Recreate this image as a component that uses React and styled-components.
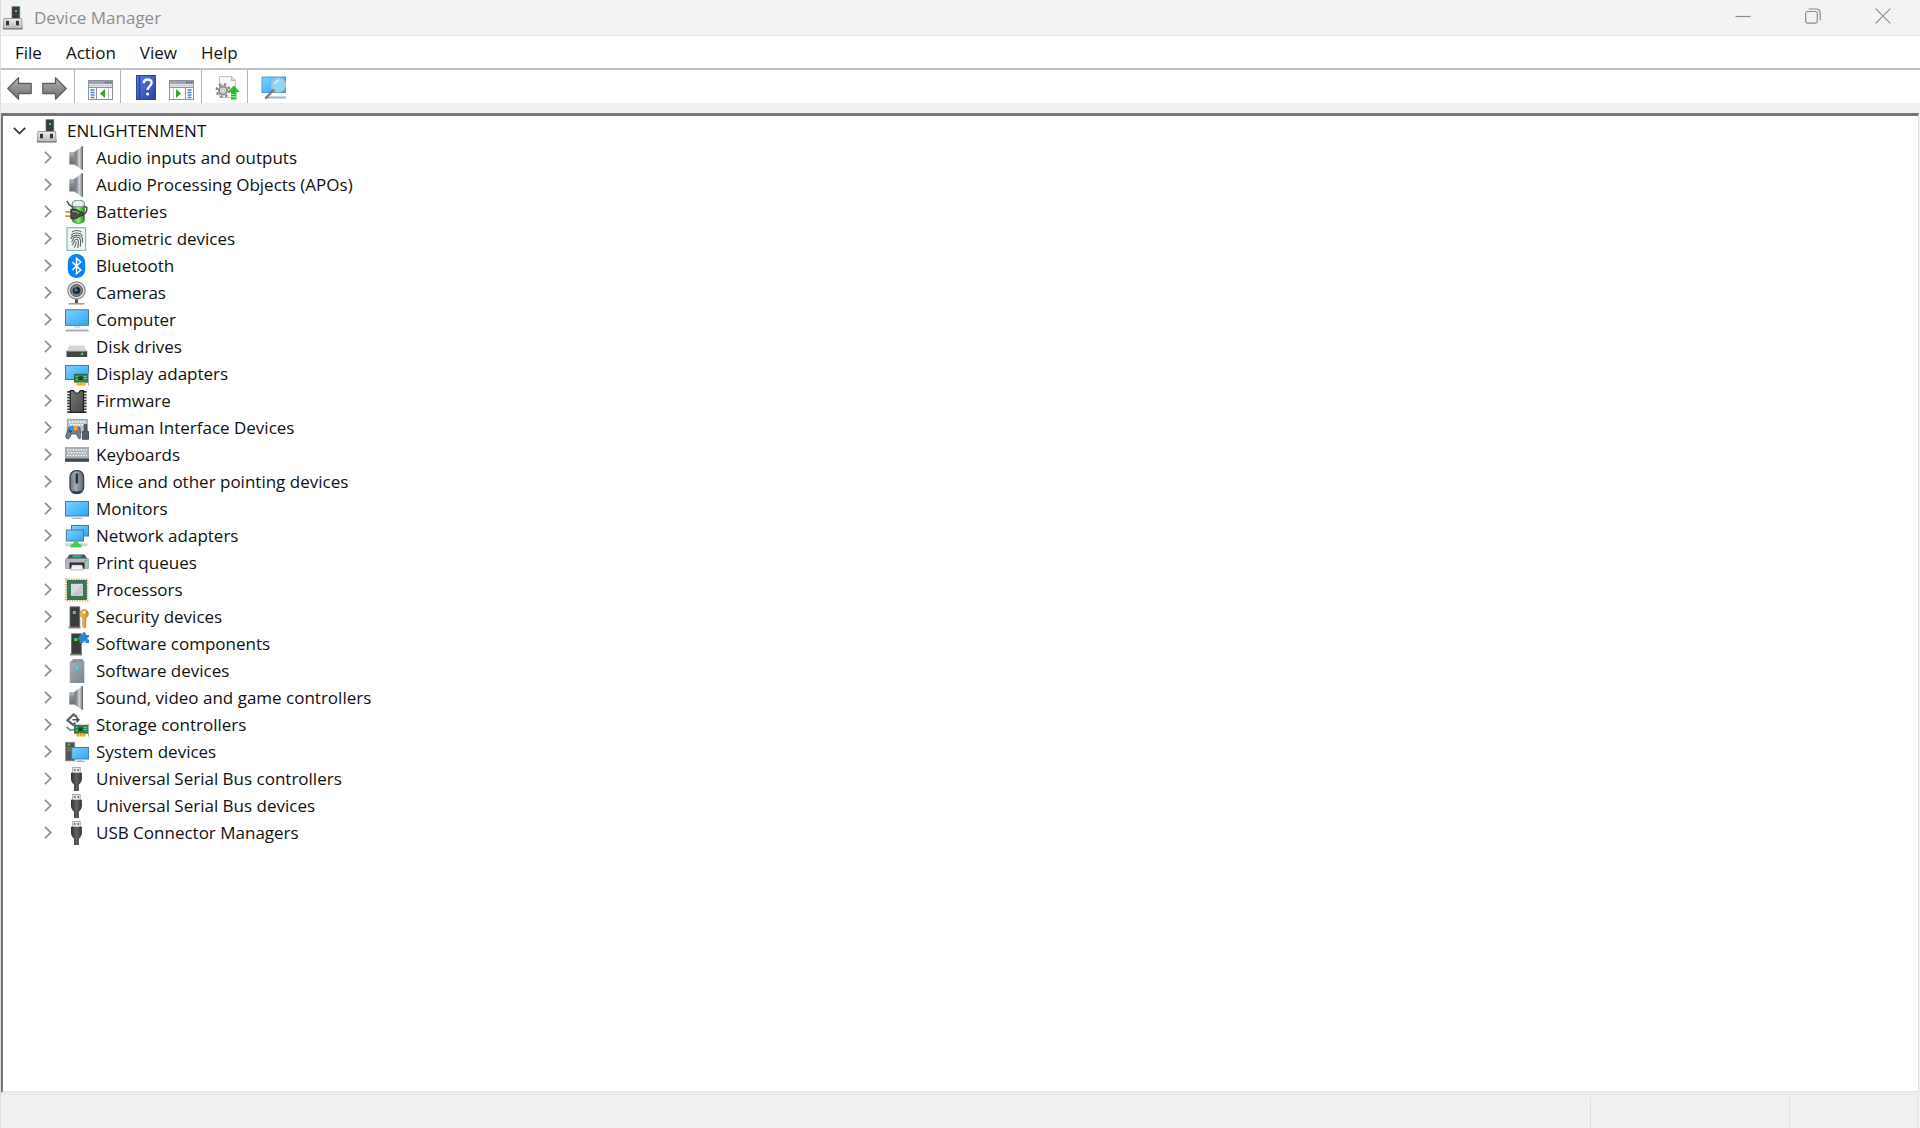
import React, { useState } from "react";
import styled, { createGlobalStyle } from "styled-components";

const App = () => {
  const [open, setOpen] = useState(true);

  return (
    <>
      <GlobalStyle />
      <Gradients />
      <Window>
        <TitleBar>
          <DeviceIcon name="root" />
          <Title>Device Manager</Title>
          <WindowButton aria-label="Minimize">
            <svg width="16" height="16" viewBox="0 0 16 16"><path d="M0.5 8.5h15" /></svg>
          </WindowButton>
          <WindowButton aria-label="Restore">
            <svg width="16" height="16" viewBox="0 0 16 16">
              <rect x="0.7" y="3.5" width="11.6" height="11.6" rx="1.8" />
              <path d="M3.6 1h7.6c2.4 0 4 1.6 4 4v7.2" />
            </svg>
          </WindowButton>
          <WindowButton aria-label="Close">
            <svg width="16" height="16" viewBox="0 0 16 16"><path d="M0.7 0.7l14.6 14.6M15.3 0.7L0.7 15.3" /></svg>
          </WindowButton>
        </TitleBar>

        <MenuBar>
          {menus.map((menu) => (
            <MenuButton key={menu}>{menu}</MenuButton>
          ))}
        </MenuBar>

        <Toolbar>
          {tools.map((group, index) => (
            <ToolGroup key={index}>
              {group.map((tool) => (
                <ToolButton key={tool.name} aria-label={tool.label}>
                  <svg width="25" height="25" viewBox="0 0 25 25">{toolIcons[tool.name]}</svg>
                </ToolButton>
              ))}
            </ToolGroup>
          ))}
        </Toolbar>

        <TreePanel>
          <Tree>
            <li>
              <TreeRow>
                <Expander aria-label="Toggle ENLIGHTENMENT" $open={open} onClick={() => setOpen(!open)}>
                  <svg width="13" height="8" viewBox="0 0 13 8"><path d="M0.8 0.8L6.5 6.5L12.2 0.8" /></svg>
                </Expander>
                <DeviceIcon name="root" />
                <Label>ENLIGHTENMENT</Label>
              </TreeRow>
              {open && (
                <SubTree>
                  {devices.map((device) => (
                    <li key={device.name}>
                      <TreeRow>
                        <Expander aria-label={`Expand ${device.name}`}>
                          <svg width="8" height="13" viewBox="0 0 8 13"><path d="M1 0.8L6.8 6.5L1 12.2" /></svg>
                        </Expander>
                        <DeviceIcon name={device.icon} />
                        <Label>{device.name}</Label>
                      </TreeRow>
                    </li>
                  ))}
                </SubTree>
              )}
            </li>
          </Tree>
        </TreePanel>

        <StatusBar>
          <StatusCell />
          <StatusCell $width="199px" />
          <StatusCell $width="128px" />
        </StatusBar>
      </Window>
    </>
  );
};

export default App;

const DeviceIcon = ({ name }) => (
  <IconSvg viewBox="0 0 24 24" aria-hidden="true">{deviceIcons[name]}</IconSvg>
);

const Gradients = () => (
  <GradientSvg width="0" height="0" aria-hidden="true">
    <defs>
      <linearGradient id="screen" x1="0" y1="0" x2="1" y2="1">
        <stop offset="0" stopColor="#7fd0fb" />
        <stop offset="0.5" stopColor="#55bcfb" />
        <stop offset="1" stopColor="#2ea3f7" />
      </linearGradient>
      <linearGradient id="metal" x1="0" y1="0" x2="0" y2="1">
        <stop offset="0" stopColor="#eeeef0" />
        <stop offset="1" stopColor="#b4b4b8" />
      </linearGradient>
      <linearGradient id="cone" x1="0" y1="0" x2="1" y2="0">
        <stop offset="0" stopColor="#6f7478" />
        <stop offset="0.35" stopColor="#8d9298" />
        <stop offset="0.7" stopColor="#d2d5d8" />
        <stop offset="1" stopColor="#8a8e93" />
      </linearGradient>
      <linearGradient id="coneBack" x1="0" y1="0" x2="0" y2="1">
        <stop offset="0" stopColor="#b5bbc0" />
        <stop offset="0.5" stopColor="#7c858d" />
        <stop offset="1" stopColor="#6b7178" />
      </linearGradient>
      <linearGradient id="dark" x1="0" y1="0" x2="1" y2="0">
        <stop offset="0" stopColor="#303030" />
        <stop offset="0.5" stopColor="#636363" />
        <stop offset="1" stopColor="#343434" />
      </linearGradient>
      <linearGradient id="chip" x1="0" y1="0" x2="1" y2="1">
        <stop offset="0" stopColor="#7a7a7a" />
        <stop offset="1" stopColor="#454545" />
      </linearGradient>
      <linearGradient id="arrow" x1="0" y1="0" x2="0" y2="1">
        <stop offset="0" stopColor="#b9b9b9" />
        <stop offset="0.5" stopColor="#8e8e8e" />
        <stop offset="1" stopColor="#747474" />
      </linearGradient>
      <linearGradient id="help" x1="0" y1="0" x2="1" y2="1">
        <stop offset="0" stopColor="#5a7fe6" />
        <stop offset="1" stopColor="#2b3f9e" />
      </linearGradient>
      <linearGradient id="cell" x1="0" y1="0" x2="1" y2="0">
        <stop offset="0" stopColor="#2d9f24" />
        <stop offset="0.5" stopColor="#8df07c" />
        <stop offset="1" stopColor="#209018" />
      </linearGradient>
      <linearGradient id="mouse" x1="0" y1="0" x2="1" y2="0">
        <stop offset="0" stopColor="#66707c" />
        <stop offset="0.4" stopColor="#a3afbb" />
        <stop offset="1" stopColor="#5c6672" />
      </linearGradient>
      <linearGradient id="slate" x1="0" y1="0" x2="1" y2="1">
        <stop offset="0" stopColor="#a9b2b9" />
        <stop offset="1" stopColor="#79838b" />
      </linearGradient>
      <linearGradient id="key" x1="0" y1="0" x2="1" y2="0">
        <stop offset="0" stopColor="#f3c35a" />
        <stop offset="1" stopColor="#c88e1e" />
      </linearGradient>
    </defs>
  </GradientSvg>
);

const menus = ["File", "Action", "View", "Help"];

const tools = [
  [
    { name: "back", label: "Back" },
    { name: "forward", label: "Forward" },
  ],
  [{ name: "tree", label: "Show/Hide Console Tree" }],
  [
    { name: "help", label: "Help" },
    { name: "pane", label: "Show/Hide Action Pane" },
  ],
  [{ name: "update", label: "Update device driver" }],
  [{ name: "scan", label: "Scan for hardware changes" }],
];

const devices = [
  { name: "Audio inputs and outputs", icon: "speaker" },
  { name: "Audio Processing Objects (APOs)", icon: "speaker" },
  { name: "Batteries", icon: "battery" },
  { name: "Biometric devices", icon: "fingerprint" },
  { name: "Bluetooth", icon: "bluetooth" },
  { name: "Cameras", icon: "camera" },
  { name: "Computer", icon: "computer" },
  { name: "Disk drives", icon: "disk" },
  { name: "Display adapters", icon: "display" },
  { name: "Firmware", icon: "firmware" },
  { name: "Human Interface Devices", icon: "hid" },
  { name: "Keyboards", icon: "keyboard" },
  { name: "Mice and other pointing devices", icon: "mouse" },
  { name: "Monitors", icon: "monitor" },
  { name: "Network adapters", icon: "network" },
  { name: "Print queues", icon: "printer" },
  { name: "Processors", icon: "processor" },
  { name: "Security devices", icon: "security" },
  { name: "Software components", icon: "component" },
  { name: "Software devices", icon: "software" },
  { name: "Sound, video and game controllers", icon: "speaker" },
  { name: "Storage controllers", icon: "storage" },
  { name: "System devices", icon: "system" },
  { name: "Universal Serial Bus controllers", icon: "usb" },
  { name: "Universal Serial Bus devices", icon: "usb" },
  { name: "USB Connector Managers", icon: "usb" },
];

const consoleFrame = (
  <>
    <rect x="0.5" y="5.5" width="24" height="19" fill="#fff" stroke="#8c939c" />
    <rect x="1" y="6" width="23" height="3" fill="#9aa5b4" />
    <path d="M17 7.5h1.5M19.5 7.5h1.5M22 7.5h1.5" stroke="#4b5a70" strokeWidth="1.4" />
    <path d="M1 10.5h23" stroke="#c3c9d0" strokeWidth="2" />
    <path d="M1 12.5h23" stroke="#8c939c" />
  </>
);

const toolIcons = {
  back: <path d="M0.8 13.5L11.5 2.6V8.5H24.2V18.5H11.5V24.2Z" fill="url(#arrow)" stroke="#5f5f5f" strokeWidth="1.3" strokeLinejoin="round" />,
  forward: <path d="M24.2 13.5L13.5 2.6V8.5H0.8V18.5H13.5V24.2Z" fill="url(#arrow)" stroke="#5f5f5f" strokeWidth="1.3" strokeLinejoin="round" />,
  tree: (
    <>
      {consoleFrame}
      <path d="M8.5 13v11" stroke="#8c939c" />
      <path d="M2.5 15h4M2.5 17.5h4M2.5 20h4M2.5 22.5h4" stroke="#4d7fc0" strokeWidth="1.3" />
      <path d="M20.5 13v11" stroke="#b9c0c8" />
      <path d="M17 14v9l-5-4.5z" fill="#35a81c" />
    </>
  ),
  help: (
    <>
      <rect x="2.5" y="0.5" width="19" height="24" fill="url(#help)" stroke="#2d469f" />
      <path d="M5.5 1v23" stroke="#2c4098" strokeWidth="1.5" />
      <path d="M9.8 8.3c0-2.5 1.7-3.8 3.9-3.8 2.5 0 3.9 1.3 3.9 3.3 0 3.2-3.9 3.4-3.9 7.2" fill="none" stroke="#f4f6fc" strokeWidth="2.4" />
      <circle cx="13.6" cy="19" r="1.6" fill="#f4f6fc" />
    </>
  ),
  pane: (
    <>
      {consoleFrame}
      <path d="M16.5 13v11" stroke="#8c939c" />
      <path d="M18.5 15h4M18.5 17.5h4M18.5 20h4M18.5 22.5h4" stroke="#4d7fc0" strokeWidth="1.3" />
      <path d="M4.500 13v11" stroke="#b9c0c8" />
      <path d="M7 14v9l5-4.5z" fill="#35a81c" />
    </>
  ),
  update: (
    <>
      <path d="M4.5 1.5h12l4 4v17h-16z" fill="#f8f8f8" stroke="#c4c4c4" />
      <path d="M16.5 1.500v4h4z" fill="#ddd" stroke="#bbb" />
      <circle cx="8" cy="15.500" r="6.300" fill="none" stroke="#8b8b8b" strokeWidth="2.4" strokeDasharray="2.5 2.45" />
      <circle cx="8" cy="15.500" r="4" fill="#dedede" stroke="#8d8d8d" strokeWidth="2" />
      <circle cx="8" cy="15.500" r="1.4" fill="#fff" stroke="#999" strokeWidth="0.7" />
      <path d="M18.8 10.500l6 6.5h-3.2v2h-5.6v-2h-3.2z" fill="#25c12a" />
      <path d="M16 20.500h5.600M16 23.500h5.600" stroke="#25c12a" strokeWidth="1.8" />
    </>
  ),
  scan: (
    <>
      <rect x="1" y="2" width="23.5" height="15.5" fill="url(#screen)" stroke="#4d9fce" />
      <path d="M4 22.500h21" stroke="#9eb3c4" strokeWidth="2" />
      <circle cx="17.5" cy="10" r="6.8" fill="#8dd4fa" stroke="#b8c2cb" strokeWidth="1.6" />
      <path d="M14 9c0.500-2 2-3.400 4-3.400" fill="none" stroke="#d9f3ff" strokeWidth="1.5" />
      <path d="M12.300 15.200L5 22.800" stroke="#76838e" strokeWidth="2.4" strokeLinecap="round" />
    </>
  ),
};

const tower = (
  <>
    <path d="M3.5 21.5h12v2h-12z" fill="#8b8b8b" />
    <rect x="5" y="1.8" width="9.8" height="20.2" fill="#3c3c3c" stroke="#6b6b6b" strokeWidth="0.8" />
    <rect x="7.8" y="6" width="3" height="3" fill="#38e838" />
  </>
);

const board = (
  <>
    <rect x="9.6" y="12.2" width="13" height="8" fill="#2f8552" stroke="#1d5b36" strokeWidth="0.8" />
    <rect x="13.5" y="14.5" width="4" height="3.5" fill="#17412a" />
    <path d="M19 14.5h2.5M19 16.5h2.5M11 14.5h1.500M11 17.500h1.500" stroke="#8fd1a8" strokeWidth="0.9" />
    <path d="M23.4 11v12.5" stroke="#a9b0b4" strokeWidth="1.2" />
    <path d="M11.500 22h9" stroke="#f0a81c" strokeWidth="3" />
    <path d="M14.5 20.5v3M17.5 20.5v3" stroke="#ffd873" strokeWidth="0.7" />
  </>
);

const deviceIcons = {
  root: (
    <>
      <rect x="10" y="0.7" width="7.8" height="12.5" fill="#3b3b3b" stroke="#6c6c6c" strokeWidth="0.7" />
      <rect x="13" y="4" width="2" height="2" fill="#35e03a" />
      <path d="M2 12.500h17.500l0.800 10.500h-19.200z" fill="url(#metal)" stroke="#94949a" strokeWidth="0.9" />
      <path d="M1 22.700h19.500" stroke="#7b7b80" strokeWidth="1.2" />
      <rect x="4" y="14.800" width="3" height="4.5" fill="#333" />
      <rect x="14" y="14.800" width="3" height="4.5" fill="#333" />
    </>
  ),
  speaker: (
    <>
      <rect x="4.3" y="6" width="5.4" height="12.5" fill="url(#coneBack)" />
      <path d="M9.3 6L16.500 0.500v23L9.300 18.500z" fill="url(#cone)" />
      <path d="M17.300 0.200v23.600" stroke="#63686d" strokeWidth="1.5" />
    </>
  ),
  battery: (
    <>
      <path d="M7.300 3.500c0-4.400 12-4.400 12 0v16.800c0 4-12 4-12 0z" fill="url(#cell)" stroke="#27752a" strokeWidth="0.8" />
      <path d="M7.300 3.700c0-4.600 12-4.600 12 0v2c-2 1.200-10 1.200-12 0z" fill="#eceef5" stroke="#8185a0" strokeWidth="0.8" />
      <path d="M2 1l2 3.500 3.500 2.500M17.500 14c3 0.500 4.500-2 4.300-6.500l-2.300-1" fill="none" stroke="#444" strokeWidth="1.5" />
      <path d="M0.300 11.800h6M0.300 16.200h6" stroke="#d09c24" strokeWidth="1.7" />
      <path d="M5.800 9.300h3.700c3 0 4 2 8.500 3.200v3c-4 0.500-5 3.200-8.500 3.200H5.800z" fill="#4b4b4b" stroke="#242424" strokeWidth="0.8" />
      <path d="M7 11.500h3.500l3.500 1.800" fill="none" stroke="#9d9d9d" strokeWidth="1.2" />
    </>
  ),
  fingerprint: (
    <>
      <rect x="2" y="0.700" width="18.600" height="22.800" fill="#edf6f4" stroke="#8bbab5" strokeWidth="1.2" />
      <g fill="none" stroke="#59625f" strokeWidth="1.1">
        <path d="M7.200 5c2.500-2 6.500-2 9 0" />
        <path d="M6 8.500c2.500-3 8.500-3.500 11.500 0" />
        <path d="M6 12c0.500-4 9.500-5.500 11.500-0.500v4" />
        <path d="M6.500 15c2-1.500 0.500-5 5-5s4.500 3.500 3.800 9.500" />
        <path d="M7 18c2.800-1.500 1.500-5.800 4.500-5.800 2.800 0 2 4.800 1.200 8.800" />
        <path d="M9 20.500c1.800-1.500 2.200-3.500 2.300-6" />
      </g>
    </>
  ),
  bluetooth: (
    <>
      <rect x="2.8" y="0" width="17.400" height="24" rx="8.200" fill="#0a84f5" />
      <path d="M7.200 8l8.600 8-4.300 3.700V4.300L15.800 8l-8.600 8" fill="none" stroke="#fff" strokeWidth="1.5" />
    </>
  ),
  camera: (
    <>
      <path d="M10 18h3v4h-3z" fill="#555" />
      <path d="M3.500 22.800h16" stroke="#9c9c9c" strokeWidth="1.5" />
      <circle cx="11.500" cy="9.500" r="8.700" fill="#dcdcdc" stroke="#858585" strokeWidth="1.2" />
      <circle cx="11.500" cy="9.500" r="6" fill="#858585" stroke="#555" />
      <circle cx="11.500" cy="9.500" r="3.800" fill="#1f2a3c" />
      <circle cx="11" cy="9" r="1.600" fill="#5279b5" />
      <path d="M9.500 7l1-0.800" stroke="#fff" />
    </>
  ),
  computer: (
    <>
      <rect x="0.500" y="1.800" width="23" height="15.500" fill="url(#screen)" stroke="#507990" />
      <path d="M9 18h6v2H9z" fill="#d8dde2" />
      <path d="M2 20.800h20l1.500 2H0.500z" fill="#d3dee7" />
      <path d="M0.300 22.800h23.400" stroke="#8fa3b3" strokeWidth="1.2" />
    </>
  ),
  disk: (
    <>
      <path d="M4.500 10.500h14.500l3 6H1.500z" fill="#d6d6d8" />
      <path d="M1.500 16h20.700v6H1.500z" fill="#454747" />
      <path d="M1.500 16.300h20.700" stroke="#8c8e90" />
      <circle cx="17" cy="19" r="1.300" fill="#33e04b" />
    </>
  ),
  display: (
    <>
      <rect x="0.500" y="3.500" width="23" height="14" fill="url(#screen)" stroke="#507990" />
      {board}
    </>
  ),
  firmware: (
    <>
      <path d="M4 2v22M19.800 2v22" stroke="#3c3c3c" strokeWidth="3.6" strokeDasharray="1.7 1.2" />
      <path d="M5.300 1.700h3.300l1.600 2.300h3.400l1.600-2.300h3.300v21.600H5.300z" fill="url(#chip)" stroke="#222" strokeWidth="1.2" />
    </>
  ),
  hid: (
    <>
      <rect x="2.3" y="3.300" width="20" height="13" fill="#b7bec5" stroke="#8e979f" strokeWidth="0.8" />
      <path d="M4 6h17M5 8.700h16" stroke="#fff" strokeWidth="1.5" strokeDasharray="1.8 1" />
      <path d="M3.500 11.500c1.500-1 10-1 11.300 0l1 9c0 3-2.200 3-3 0.500l-1.300-3H6.500l-1.700 3.500c-1.500 2.300-4.300 1.500-4-1.500z" fill="#76818b" stroke="#48525b" strokeWidth="0.8" />
      <circle cx="5.500" cy="15" r="1.700" fill="#3c454d" />
      <rect x="5" y="10" width="4" height="4.500" fill="#2c9af5" />
      <rect x="9" y="10" width="3.500" height="4.500" fill="#f5ab2c" />
      <circle cx="12" cy="15" r="1.300" fill="#e05043" />
      <path d="M19.300 8.500h2.400v7h1.800v7.800h-6V15.500h1.800z" fill="#56616b" stroke="#343c44" strokeWidth="0.8" />
    </>
  ),
  keyboard: (
    <>
      <rect x="0.300" y="4.500" width="23.400" height="11" fill="#a7aeb5" stroke="#8e979f" strokeWidth="0.6" />
      <path d="M2 7h20M3 9.700h19M2 12.400h20" stroke="#f4f5f6" strokeWidth="1.5" strokeDasharray="1.7 1" />
      <path d="M0 15.500h24v3.300H0z" fill="#3e484f" />
    </>
  ),
  mouse: (
    <>
      <rect x="5" y="0.700" width="13.600" height="22.800" rx="6" fill="url(#mouse)" stroke="#39414a" strokeWidth="1.3" />
      <path d="M8 21.300c2 1.200 5.600 1.200 7.600 0" fill="none" stroke="#2c333b" strokeWidth="1.8" />
      <path d="M11.800 3.500v10" stroke="#2c333b" strokeWidth="2.6" />
    </>
  ),
  monitor: (
    <>
      <rect x="0.500" y="4.500" width="23" height="14.500" fill="url(#screen)" stroke="#507990" />
      <path d="M10 19.500h4v1.500h-4z" fill="#d0d6db" />
      <path d="M6.500 21.300h11" stroke="#a3b4c2" strokeWidth="1.2" />
    </>
  ),
  network: (
    <>
      <rect x="6.500" y="1.500" width="17" height="10.500" fill="url(#screen)" stroke="#507990" />
      <rect x="1.300" y="6" width="17.200" height="11" fill="url(#screen)" stroke="#507990" />
      <path d="M0 20.800h22.500" stroke="#d0d3d5" strokeWidth="3" />
      <path d="M8.500 17.500h5v2l3 1.200v2.800h-11v-2.800l3-1.200z" fill="#4fc953" />
    </>
  ),
  printer: (
    <>
      <path d="M4.500 3.500h15l3 4.500h-21z" fill="#4a4f52" />
      <path d="M7.500 5.300h9" stroke="#2ebd82" strokeWidth="2" />
      <rect x="0.300" y="7.500" width="23.400" height="10" rx="0.800" fill="#b1b7bd" stroke="#82888e" strokeWidth="0.6" />
      <path d="M20 9.500h2" stroke="#27d845" strokeWidth="1.4" />
      <path d="M4.500 11.500h15v6h-15z" fill="#2a2d2f" />
      <path d="M7 14h10l1.500 5H5.500z" fill="#f3f3f3" stroke="#8f8f8f" strokeWidth="0.6" />
    </>
  ),
  processor: (
    <>
      <rect x="1" y="1.300" width="21.600" height="21.400" fill="none" stroke="#d0ac4d" strokeWidth="1.7" strokeDasharray="1.3 1.2" />
      <rect x="2.300" y="2.500" width="19" height="19" fill="#38755a" stroke="#25604a" strokeWidth="0.8" />
      <rect x="6" y="5.800" width="12" height="12" fill="#d9dadb" />
      <path d="M6 17.800L18 5.800v12z" fill="#c8cacc" />
    </>
  ),
  security: (
    <>
      {tower}
      <path d="M17.600 11h3.300v11l-1.600 1.300-1.700-1.500z" fill="url(#key)" stroke="#af7f24" strokeWidth="0.5" />
      <circle cx="19.200" cy="8.800" r="4.300" fill="url(#key)" stroke="#b5852c" strokeWidth="0.6" />
      <circle cx="19.200" cy="7.200" r="1.300" fill="#fff" />
    </>
  ),
  component: (
    <>
      <g transform="translate(1.500 0)">{tower}</g>
      <path d="M14.500 3h2.800V1.500l1-1.300h1.600l1 1.300V3H24v2.200h-1.500v2.300H24V11h-3.500V9.500h-2V11h-4V7.800H13V5h1.500z" fill="#2c86cf" />
    </>
  ),
  software: (
    <>
      <path d="M4.700 3.500L8.200 0.300h9.300l1.800 3V24H4.700z" fill="url(#slate)" />
      <path d="M4.700 3.800L8.200 0.300h9.300l1.800 3.500z" fill="#8e989f" />
      <circle cx="12" cy="8.800" r="1.800" fill="#3cd9ee" />
    </>
  ),
  storage: (
    <>
      <path d="M12 4L8.500 1.500 2.500 7.200l5.500 4.600 2.500-1.800" fill="none" stroke="#5c6164" strokeWidth="2.3" />
      <path d="M7.500 6.700h6.300M11.500 4.500l2.300 2.200-2.300 2.600" fill="none" stroke="#484d51" strokeWidth="1.6" />
      <path d="M1.500 14l4 3.300 4-1" fill="none" stroke="#878c90" strokeWidth="1.8" />
      {board}
    </>
  ),
  system: (
    <>
      <rect x="0.700" y="2.300" width="9" height="18.500" fill="#545454" stroke="#838383" strokeWidth="0.8" />
      <rect x="3" y="3.700" width="1.800" height="1.800" fill="#38e838" />
      <path d="M2 8h4M2 10.500h4" stroke="#8b8b8b" strokeWidth="0.9" />
      <rect x="6.700" y="7.500" width="17" height="11.500" fill="url(#screen)" stroke="#507990" />
      <path d="M13.500 19.500h3.500v1.500h-3.500z" fill="#c5ccd2" />
      <path d="M11 21.300h9" stroke="#9fb0be" strokeWidth="1.2" />
    </>
  ),
  usb: (
    <>
      <rect x="7.700" y="0.400" width="7.500" height="6" fill="#e8e8e8" stroke="#999" strokeWidth="0.8" />
      <path d="M9.800 2v2M13.200 2v2" stroke="#666" strokeWidth="1.3" />
      <path d="M6 5.800h10.900v6.200c0 2.300-1.500 4-2.400 5.200H8.400c-0.900-1.200-2.400-2.900-2.400-5.200z" fill="url(#dark)" />
      <path d="M9.100 17h4.700v7H9.100z" fill="url(#dark)" />
    </>
  ),
};

const GlobalStyle = createGlobalStyle`
  * {
    box-sizing: border-box;
  }
  body {
    margin: 0;
    background-color: #f0f0f0;
    color: #111;
    font-family: "Open Sans", "Noto Sans", sans-serif;
    font-size: 17px;
  }
  button {
    border: 0;
    padding: 0;
    background: none;
    color: inherit;
    font: inherit;
  }
`;

const GradientSvg = styled.svg`
  position: absolute;
`;

const Window = styled.div`
  display: flex;
  flex-direction: column;
  min-height: 100vh;
  border-left: 1px solid #dcdcdc;
`;

const IconSvg = styled.svg`
  width: 24px;
  height: 24px;
  flex-shrink: 0;
`;

const TitleBar = styled.header`
  display: flex;
  align-items: center;
  height: 36px;
  padding: 0 2px 0 1px;
  background-color: #f3f3f3;
  border-bottom: 1px solid #e8e8e8;
`;

const Title = styled.h1`
  flex: 1;
  margin: 0 0 0 8px;
  color: #8e8e8e;
  font-size: 17px;
  font-weight: 400;
`;

const WindowButton = styled.button`
  display: flex;
  align-items: center;
  justify-content: center;
  align-self: flex-start;
  width: 70px;
  height: 32px;

  svg {
    fill: none;
    stroke: #8c8c8c;
    stroke-width: 1.2;
  }
`;

const MenuBar = styled.nav`
  display: flex;
  align-items: center;
  height: 34px;
  padding: 0 2px;
  background-color: #fff;
  border-bottom: 2px solid #bfc3c6;
`;

const MenuButton = styled.button`
  padding: 0 12px;
`;

const Toolbar = styled.div`
  display: flex;
  height: 33px;
  padding: 0 1px;
  background-color: #fff;
`;

const ToolGroup = styled.div`
  display: flex;
  padding-right: 2px;

  & + & {
    padding-left: 8px;
    border-left: 1px solid #b5b5b5;
  }
`;

const ToolButton = styled.button`
  display: flex;
  align-items: flex-end;
  justify-content: center;
  width: 35px;
  padding-bottom: 3px;
`;

const TreePanel = styled.main`
  flex: 1;
  margin: 10px 1px 1px 0;
  padding: 1px 0;
  background-color: #fff;
  border-top: 3px solid #757575;
  border-left: 2px solid #757575;
  border-right: 1px solid #e3e3e3;
  border-bottom: 2px solid #e8e8e8;
`;

const Tree = styled.ul`
  margin: 0;
  padding: 0 0 0 4px;
  list-style: none;
`;

const SubTree = styled.ul`
  margin: 0;
  padding: 0 0 0 29px;
  list-style: none;
`;

const TreeRow = styled.div`
  display: flex;
  align-items: center;
  height: 27px;
`;

const Expander = styled.button`
  display: flex;
  align-items: center;
  justify-content: center;
  width: 24px;
  height: 27px;
  margin-right: 5px;

  svg {
    fill: none;
    stroke: ${(props) => (props.$open ? "#404040" : "#929292")};
    stroke-width: 1.8;
  }
`;

const Label = styled.span`
  margin-left: 7px;
  line-height: 27px;
  white-space: nowrap;
`;

const StatusBar = styled.footer`
  display: flex;
  height: 34px;
  padding: 3px 2px 0 0;
  background-color: #f0f0f0;
  border-top: 1px solid #e8e8e8;
`;

const StatusCell = styled.div`
  flex: ${(props) => (props.$width ? `0 0 ${props.$width}` : "1")};
  border-right: 1px solid #dfdfdf;
`;
